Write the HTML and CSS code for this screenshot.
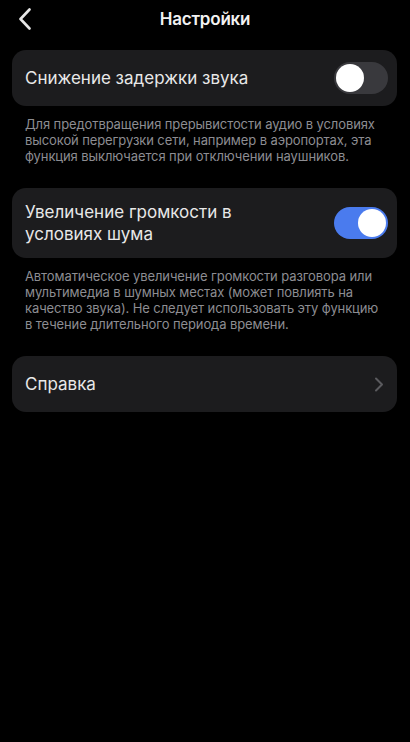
FILE: index.html
```html
<!DOCTYPE html>
<html lang="ru">
<head>
    <meta charset="UTF-8">
    <meta name="viewport" content="width=device-width, initial-scale=1.0">
    <title>Настройки</title>
    <link rel="stylesheet" href="styles.css">
</head>
<body>
    <header class="bar">
        <button class="back" aria-label="Назад">
            <svg width="14" height="22" viewBox="0 0 14 22">
                <path d="M11.5 1.5 L2.5 11 L11.5 20.5" fill="none" stroke="#e6e6e6" stroke-width="2.6" stroke-linecap="round" stroke-linejoin="round"/>
            </svg>
        </button>
        <h1 class="title">Настройки</h1>
    </header>

    <main class="list">
        <section class="group">
            <div class="card">
                <span class="label">Снижение задержки звука</span>
                <span class="switch"><span class="knob"></span></span>
            </div>
            <p class="note">Для предотвращения прерывистости аудио в условиях высокой перегрузки сети, например в аэропортах, эта функция выключается при отключении наушников.</p>
        </section>

        <section class="group">
            <div class="card tall">
                <span class="label">Увеличение громкости в<br>условиях шума</span>
                <span class="switch on"><span class="knob"></span></span>
            </div>
            <p class="note">Автоматическое увеличение громкости разговора или мультимедиа в шумных местах (может повлиять на качество звука). Не следует использовать эту функцию в течение длительного периода времени.</p>
        </section>

        <section class="group">
            <div class="card">
                <span class="label">Справка</span>
                <svg class="more" width="10" height="15" viewBox="0 0 10 15">
                    <path d="M2 1.5 L8 7.5 L2 13.5" fill="none" stroke="#5a5a5e" stroke-width="2" stroke-linecap="round" stroke-linejoin="round"/>
                </svg>
            </div>
        </section>
    </main>
</body>
</html>
```

FILE: styles.css
```css
* {
    margin: 0;
    padding: 0;
    box-sizing: border-box;
}

body {
    background: #000;
    color: #ececec;
    font-family: Inter, "Noto Sans", sans-serif;
    width: 410px;
    min-height: 742px;
}

.bar {
    height: 38px;
    display: flex;
    align-items: center;
    justify-content: center;
    position: relative;
}

.back {
    position: absolute;
    left: 18px;
    top: 8px;
    background: none;
    border: none;
    display: flex;
}

.title {
    font-size: 17px;
    font-weight: 600;
    letter-spacing: -0.2px;
    color: #f2f2f2;
}

.list {
    padding: 12px 13px 0 12px;
    display: flex;
    flex-direction: column;
    gap: 24px;
}

.card {
    background: #1c1c1e;
    border-radius: 14px;
    height: 56px;
    padding: 0 9px 0 13px;
    display: flex;
    align-items: center;
    justify-content: space-between;
}

.card.tall {
    height: 70px;
}

.label {
    font-size: 17px;
    line-height: 22px;
    color: #e8e8e8;
}

.switch {
    width: 54px;
    height: 32px;
    border-radius: 16px;
    background: #39393d;
    padding: 2px;
    display: flex;
    flex-shrink: 0;
}

.switch.on {
    background: #4a7bee;
    justify-content: flex-end;
}

.knob {
    width: 28px;
    height: 28px;
    border-radius: 50%;
    background: #fff;
}

.more {
    margin-right: 4px;
}

.note {
    padding: 10px 11px 0 13px;
    font-size: 13px;
    line-height: 16px;
    letter-spacing: -0.1px;
    color: #8d8d92;
}
```
